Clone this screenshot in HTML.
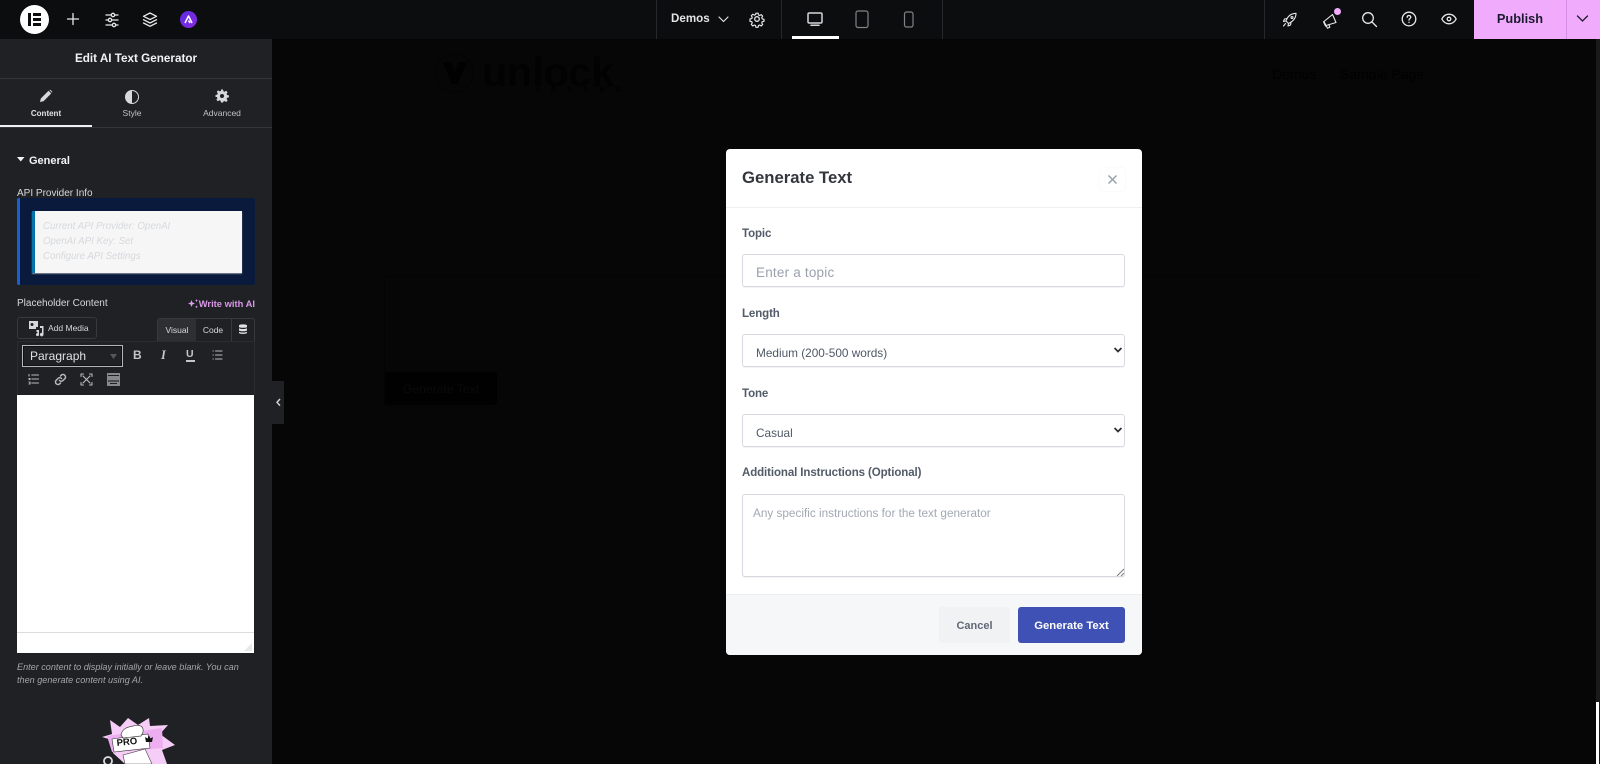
<!DOCTYPE html>
<html lang="en"><head><meta charset="utf-8"><title>Edit AI Text Generator</title>
<style>
*{box-sizing:border-box}
html,body{margin:0;padding:0;width:1600px;height:764px;overflow:hidden;background:#060606;font-family:"Liberation Sans",sans-serif}
.a{position:absolute;white-space:nowrap}
svg{position:absolute;overflow:visible;fill:none}
.ic{stroke:#e6e8ea;stroke-width:1.300;stroke-linecap:round;stroke-linejoin:round}
.t{stroke:#b8babd;stroke-width:1.100;stroke-linecap:round;stroke-linejoin:round}
.lab{font-size:11.500px;font-weight:bold;color:#525b68;line-height:16px;left:742px;letter-spacing:-.1px}
.box{left:742px;width:383px;background:#fff;border:1px solid #d8dae3;border-radius:3px;box-shadow:0 1px 1px rgba(0,0,0,.05)}
</style></head><body>

<!-- dimmed page -->
<svg style="left:430px;top:50px" width="200" height="60" viewBox="0 0 200 60">
<circle cx="24" cy="23" r="19" stroke="#040404" stroke-width="1.200"/>
<path d="M13 12h8l4 10 4-10h8l-9 22h-6z" fill="#010101"/></svg>
<div class="a" style="left:482px;top:52px;font-size:41px;font-weight:bold;line-height:40px;color:#020202">unlock</div>
<div class="a" style="left:535px;top:86px;font-size:7px;font-weight:bold;line-height:10px;color:#010101;letter-spacing:11px">ADDONS</div>
<div class="a" style="left:1272px;top:65px;font-size:14px;line-height:18px;color:#010101">Demos</div>
<div class="a" style="left:1340px;top:65px;font-size:14px;line-height:18px;color:#010101">Sample Page</div>
<div class="a" style="left:384px;top:276px;width:1100px;height:130px;border-top:1px solid #030303;border-left:1px solid #030303"></div>
<div class="a" style="left:385px;top:372px;width:112px;height:33px;background:#010101;border-radius:3px;color:#0a0a0a;font-size:12.200px;line-height:34px;text-align:center">Generate Text</div>

<!-- top bar -->
<div class="a" style="left:0;top:0;width:1600px;height:39px;background:#0c0d0e"></div>
<div class="a" style="left:20px;top:5px;width:29px;height:29px;border-radius:50%;background:#fff"></div>
<div class="a" style="left:28px;top:13px;width:3px;height:13px;background:#0c0d0e"></div>
<div class="a" style="left:33px;top:13px;width:8px;height:3px;background:#0c0d0e"></div>
<div class="a" style="left:33px;top:18px;width:8px;height:3px;background:#0c0d0e"></div>
<div class="a" style="left:33px;top:23px;width:8px;height:3px;background:#0c0d0e"></div>
<svg class="ic" style="left:65px;top:11px" width="16" height="16"><path d="M8 2.500v11M2.500 8h11"/></svg>
<svg class="ic" style="left:103px;top:11px" width="18" height="18"><path d="M3 4h5M12 4h3M3 9h2M9 9h6M3 14h6M13 14h2"/><circle cx="10" cy="4" r="1.700"/><circle cx="7" cy="9" r="1.700"/><circle cx="11" cy="14" r="1.700"/></svg>
<svg class="ic" style="left:141px;top:11px" width="18" height="18"><path d="M9 2l6.500 3.300L9 8.600 2.500 5.300zM2.500 8.700L9 12l6.500-3.300M2.500 12L9 15.300 15.500 12"/></svg>
<div class="a" style="left:180px;top:11px;width:17px;height:17px;border-radius:50%;background:linear-gradient(135deg,#5b2be0,#8a2be2)"></div>
<svg style="left:180px;top:11px" width="17" height="17"><path d="M5 12L8.500 5l3.500 7M8.500 9.500L10 12" stroke="#fff" stroke-width="1.500" stroke-linejoin="round"/></svg>

<div class="a" style="left:656px;top:0;width:1px;height:39px;background:#26282b"></div>
<div class="a" style="left:781px;top:0;width:1px;height:39px;background:#26282b"></div>
<div class="a" style="left:942px;top:0;width:1px;height:39px;background:#26282b"></div>
<div class="a" style="left:1264px;top:0;width:1px;height:39px;background:#26282b"></div>
<div class="a" style="left:671px;top:11px;font-size:11.600px;font-weight:bold;line-height:16px;color:#e2e4e6">Demos</div>
<svg class="ic" style="left:717px;top:13px;stroke-width:1.100" width="13" height="12"><path d="M2 4l4.500 4.500L11 4"/></svg>
<svg class="ic" style="left:749px;top:11px" width="16" height="16"><circle cx="8" cy="8" r="2.300"/><path d="M6.800 1.500h2.400l.4 2 1.300.6 1.800-1 1.600 1.700-1 1.700.5 1.400 2 .4v2.300l-2 .4-.5 1.300 1 1.800-1.600 1.600-1.800-1-1.300.6-.4 1.900H6.800l-.4-1.900-1.300-.6-1.800 1-1.600-1.600 1-1.800-.5-1.300-2-.4V7.900l2-.4.500-1.400-1-1.700 1.600-1.700 1.800 1 1.300-.6z" transform="translate(.8 .8) scale(.9)"/></svg>
<svg style="left:806px;top:11px;stroke:#d5d7da;stroke-width:1.500;stroke-linecap:round" width="18" height="17"><rect x="2" y="2" width="14" height="10" rx="1.200"/><path d="M5 14.300h8"/></svg>
<svg style="left:855px;top:10px;stroke:#808285;stroke-width:1.200" width="14" height="18"><rect x="1" y="1" width="12" height="16.500" rx="2"/></svg>
<svg style="left:903px;top:11px;stroke:#808285;stroke-width:1.200" width="12" height="17"><rect x="1.500" y="1" width="8.500" height="15" rx="2"/></svg>
<div class="a" style="left:792px;top:36px;width:47px;height:3px;background:#fff"></div>

<svg class="ic" style="left:1281px;top:11px;stroke-width:1.100" width="17" height="17"><path d="M5 10C6.500 5.500 10 2.500 15 2.300 15 7 12 10.500 7.500 12.500z"/><path d="M6 7.500L3.500 8 2.500 10.500 5 10M10 11.500L9.500 14 7 15 7.500 12.500M4.500 12.500L2.500 15"/><circle cx="11" cy="6.500" r="1"/></svg>
<svg class="ic" style="left:1321px;top:11px;stroke-width:1.100" width="18" height="18"><path d="M3 10.500L11.500 3.500 15 11.500 5 14.500zM5 14.500l1.500 2.700 2.300-1-1-2.700M2.500 10.800L4.500 15"/></svg>
<div class="a" style="left:1334px;top:8px;width:7px;height:7px;border-radius:50%;background:#f0abfc"></div>
<svg class="ic" style="left:1361px;top:11px" width="17" height="17"><circle cx="7" cy="7" r="5.300"/><path d="M11 11l4.500 4.500"/></svg>
<svg class="ic" style="left:1401px;top:11px" width="16" height="16"><circle cx="8" cy="8" r="6.800"/><path d="M6.200 6.300c0-1.100.8-1.800 1.800-1.800s1.800.7 1.800 1.700c0 1.300-1.800 1.400-1.800 2.900M8 11.300v.2"/></svg>
<svg class="ic" style="left:1441px;top:12px" width="16" height="14"><path d="M.800 7C2.500 3.800 5 2.200 8 2.200s5.500 1.600 7.200 4.800c-1.700 3.200-4.200 4.800-7.200 4.800S2.500 10.200.800 7z"/><circle cx="8" cy="7" r="1.800"/></svg>
<div class="a" style="left:1474px;top:0;width:126px;height:39px;background:#f0abfc"></div>
<div class="a" style="left:1566px;top:0;width:1px;height:39px;background:#d88ee6"></div>
<div class="a" style="left:1474px;top:0;width:92px;height:38px;text-align:center;font-size:12.800px;font-weight:bold;line-height:38px;color:#1b1a2e">Publish</div>
<svg style="left:1576px;top:14px;stroke:#1b1a2e;stroke-width:1.300;stroke-linecap:round" width="13" height="10"><path d="M1.500 2l5 5 5-5"/></svg>

<!-- side panel -->
<div class="a" style="left:0;top:39px;width:272px;height:725px;background:#1f2124"></div>
<div class="a" style="left:0;top:78px;width:272px;height:1px;background:#33363a"></div>
<div class="a" style="left:0;top:50px;width:272px;text-align:center;font-size:11.700px;font-weight:bold;line-height:18px;color:#f1f2f3">Edit AI Text Generator</div>
<div class="a" style="left:0;top:127px;width:272px;height:1px;background:#33363a"></div>
<div class="a" style="left:0;top:125px;width:92px;height:2px;background:#f0f0f1"></div>
<svg style="left:39px;top:89px" width="14" height="14"><path d="M1 13l.8-3.500L9.500 1.800 12.200 4.500 4.500 12.200zM10.300 1l1-.3 2 2-.3 1z" fill="#d5d8dc"/></svg>
<div class="a" style="left:0;top:107px;width:92px;text-align:center;font-size:8px;font-weight:bold;line-height:14px;color:#e0e1e3">Content</div>
<div class="a" style="left:125px;top:90px;width:14px;height:14px;border-radius:50%;background:linear-gradient(90deg,#d5d8dc 50%,#1f2124 50%);border:1.600px solid #d5d8dc"></div>
<div class="a" style="left:92px;top:106px;width:80px;text-align:center;font-size:8.500px;line-height:14px;color:#bfc1c4">Style</div>
<svg style="left:215px;top:89px" width="14" height="14"><path fill-rule="evenodd" d="M6 .5h2l.4 1.800 1.200.5 1.600-1 1.400 1.400-1 1.600.5 1.200 1.800.4v2l-1.800.4-.5 1.200 1 1.600-1.400 1.400-1.600-1-1.200.5L8 13.500H6l-.4-1.800-1.200-.5-1.600 1-1.400-1.400 1-1.600-.5-1.200L.5 8V6l1.800-.4.5-1.200-1-1.600 1.400-1.400 1.600 1 1.200-.5zM7 5a2 2 0 100 4 2 2 0 000-4z" fill="#d5d8dc"/></svg>
<div class="a" style="left:183px;top:106px;width:78px;text-align:center;font-size:8.500px;line-height:14px;color:#bfc1c4">Advanced</div>

<svg style="left:17px;top:157px" width="8" height="6"><path d="M0 0h7.500L3.750 4.500z" fill="#f1f2f3"/></svg>
<div class="a" style="left:29px;top:153px;font-size:11px;font-weight:bold;line-height:16px;color:#f1f2f3">General</div>
<div class="a" style="left:17px;top:187px;font-size:10px;line-height:14px;color:#d5d8dc">API Provider Info</div>
<div class="a" style="left:17px;top:198px;width:238px;height:87px;background:#0a1a3c;border-left:3px solid #1a5fd0;border-radius:2px"></div>
<div class="a" style="left:32px;top:211px;width:210px;height:62px;background:#f6f6f6;border-left:3px solid #0573aa;box-shadow:0 1px 1px rgba(255,255,255,.5)"></div>
<div class="a" style="left:43px;top:220px;font-size:9.700px;font-style:italic;line-height:14px;color:#d6d9dd">Current API Provider: OpenAI</div>
<div class="a" style="left:43px;top:235px;font-size:9.700px;font-style:italic;line-height:14px;color:#d6d9dd">OpenAI API Key: Set</div>
<div class="a" style="left:43px;top:250px;font-size:9.700px;font-style:italic;line-height:14px;color:#d6d9dd">Configure API Settings</div>
<div class="a" style="left:17px;top:297px;font-size:10px;line-height:14px;color:#d5d8dc">Placeholder Content</div>
<svg style="left:187px;top:298px" width="12" height="11"><path d="M4.500 2l1 2.500L8 5.500l-2.500 1-1 2.500-1-2.500L1 5.500l2.500-1zM9.500 1l.5 1.200 1 .4-1 .4-.5 1.200-.5-1.200-1-.4 1-.4zM9.500 7.500l.5 1 1 .4-1 .4-.5 1-.5-1-1-.4 1-.4z" fill="#e09df0"/></svg>
<div class="a" style="right:1345px;top:297px;font-size:9.400px;font-weight:bold;line-height:14px;color:#d898e6">Write with AI</div>

<div class="a" style="left:17px;top:317px;width:80px;height:22px;border:1px solid #36393d;border-radius:3px;background:#1f2124"></div>
<svg style="left:28px;top:320px" width="17" height="16"><path fill-rule="evenodd" d="M1 1h9v6H8v2H1zM4 3a1.500 1.500 0 100 3 1.500 1.500 0 000-3z" fill="#d5d8dc"/><path d="M12 6h3.500v8.500a1.800 1.800 0 11-1.500-1.700V8H12zM8.500 10H11v4.500a1.500 1.500 0 11-1.500-1.400V12H8.500z" fill="#d5d8dc"/></svg>
<div class="a" style="left:48px;top:321px;font-size:8.500px;line-height:14px;color:#d5d8dc">Add Media</div>
<div class="a" style="left:157px;top:318px;width:98px;height:24px;border:1px solid #36393d;border-bottom:0;border-radius:3px 3px 0 0"></div>
<div class="a" style="left:158px;top:319px;width:38px;height:23px;background:#2d2f33;text-align:center;font-size:8.500px;line-height:22px;color:#d5d8dc">Visual</div>
<div class="a" style="left:196px;top:319px;width:34px;height:23px;text-align:center;font-size:8.500px;line-height:22px;color:#d5d8dc">Code</div>
<div class="a" style="left:231px;top:319px;width:1px;height:23px;background:#36393d"></div>
<svg style="left:238px;top:323px" width="10" height="12"><path d="M1 2.500C1 1 9 1 9 2.500V4C9 5 1 5 1 4zM1 5.200c2 1 6 1 8 0v2.300c-2 1-6 1-8 0zM1 8.700c2 1 6 1 8 0v1C9 11.300 1 11.300 1 9.700z" fill="#e0e1e3"/></svg>

<div class="a" style="left:17px;top:341px;width:238px;height:54px;border:1px solid #2a2c30;border-bottom:0;background:#1f2124"></div>
<div class="a" style="left:22px;top:345px;width:101px;height:22px;border:1px solid #b4b6b9;box-shadow:inset 0 0 0 1px #111"></div>
<div class="a" style="left:30px;top:347px;font-size:12px;line-height:18px;color:#dfe1e3">Paragraph</div>
<svg style="left:110px;top:354px" width="8" height="6"><path d="M0 0h7L3.500 5z" fill="#55585c"/></svg>
<div class="a" style="left:133px;top:346px;font-size:12px;font-weight:bold;line-height:18px;color:#c4c6c9">B</div>
<div class="a" style="left:161px;top:346px;font-size:12.500px;font-weight:bold;font-style:italic;line-height:18px;color:#c4c6c9;font-family:'Liberation Serif',serif">I</div>
<div class="a" style="left:186px;top:346px;font-size:10.500px;font-weight:bold;line-height:17px;color:#c4c6c9">U</div>
<div class="a" style="left:186px;top:360px;width:9px;height:1.500px;background:#c4c6c9"></div>
<svg class="t" style="left:212px;top:349px" width="12" height="12"><path d="M3.500 2H10M3.500 6H10M3.500 10H10M1 2h.3M1 6h.3M1 10h.3"/></svg>
<svg class="t" style="left:28px;top:373px" width="12" height="12"><path d="M3.800 2H10.500M3.800 6H10.500M3.800 10H10.500M1 1.500v1.500M1 5.500h1v1H1M1 9h1v2H1"/></svg>
<svg class="t" style="left:54px;top:373px;stroke-width:1.500" width="13" height="13"><path d="M5.500 7.500a2.500 2.500 0 003.500 0l2-2A2.500 2.500 0 007.500 2L6.500 3M7.500 5.500a2.500 2.500 0 00-3.500 0l-2 2A2.500 2.500 0 005.500 11L6.500 10"/></svg>
<svg class="t" style="left:80px;top:373px" width="13" height="13"><path d="M3 3l7 7M10 3l-7 7M1 3.500V1h2.500M9.500 1H12v2.500M12 9.500V12H9.500M3.500 12H1V9.500"/></svg>
<div class="a" style="left:107px;top:373px;width:13px;height:13px;background:#85888c"></div>
<div class="a" style="left:108px;top:375px;width:11px;height:1px;background:#1f2124"></div>
<div class="a" style="left:108px;top:380px;width:11px;height:1.500px;background:#4a4c50"></div>
<div class="a" style="left:110px;top:383px;width:7px;height:1px;background:#1f2124"></div>

<div class="a" style="left:17px;top:395px;width:237px;height:258px;background:#fff"></div>
<div class="a" style="left:17px;top:632px;width:237px;height:1px;background:#dcdcde"></div>
<svg style="left:243px;top:642px" width="10" height="10"><path d="M9 1v8H1z" fill="#e8e8e8"/></svg>
<div class="a" style="left:17px;top:661px;font-size:9.100px;font-style:italic;line-height:13px;color:#a2a5a9">Enter content to display initially or leave blank. You can<br>then generate content using AI.</div>

<!-- PRO art -->
<svg style="left:100px;top:716px" width="80" height="48" viewBox="0 0 80 48">
<path d="M10 4l10 7 8-9 10 7 11-7 1 8 18-1-8 9 15 11-13 5 5 14H25L13 37l-1-13-10-3 10-3z" fill="#f5cdf7"/>
<path d="M7 20l55-8 1 20-51 4z" fill="#ecaef0"/>
<path d="M12 23l36-5 2 14-36 4z" fill="#fff" stroke="#333" stroke-width=".6"/>
<path d="M21 19c1-6 6-8 12-9 5-1 9-1 10 3 1 3-1 5-2 7l-18 2z" fill="#fff" stroke="#444" stroke-width=".7"/>
<path d="M23 39l22-6 7 15H25z" fill="#fff" stroke="#444" stroke-width=".6"/>
<circle cx="8" cy="45" r="4" stroke="#ddd" stroke-width="1.800"/>
<text x="17" y="30" transform="rotate(-6 17 30)" font-family="Liberation Sans,sans-serif" font-size="9.500" font-weight="bold" fill="#111">PRO</text>
<path d="M46 26l-1-5 2.500 1.500 1.500-3 1.500 3 2.500-1.500-1 5z" fill="#111"/></svg>

<!-- collapse -->
<div class="a" style="left:272px;top:381px;width:12px;height:43px;background:#1f2124"></div>
<svg style="left:275px;top:398px;stroke:#d5d8dc;stroke-width:1.400" width="7" height="9"><path d="M5 1L2 4.300 5 7.600"/></svg>

<!-- scrollbar -->
<div class="a" style="left:1596px;top:39px;width:4px;height:725px;background:#1a1a1a"></div>
<div class="a" style="left:1596px;top:702px;width:3px;height:62px;background:#fff"></div>

<!-- modal -->
<div class="a" style="left:726px;top:149px;width:416px;height:506px;background:#fff;border-radius:4px;overflow:hidden">
<div class="a" style="left:0;top:58px;width:416px;height:1px;background:#eff0f2"></div>
<div class="a" style="left:0;top:445px;width:416px;height:61px;background:#f6f7f8;border-top:1px solid #eceef0"></div>
</div>
<div class="a" style="left:742px;top:167px;font-size:16.700px;font-weight:bold;line-height:22px;color:#33373d">Generate Text</div>
<div class="a" style="left:1100px;top:168px;width:25px;height:23px;background:#fff;border-radius:3px;box-shadow:0 0 2px rgba(0,0,0,.05)"></div>
<svg style="left:1107px;top:174px;stroke:#98a1ad;stroke-width:1.500" width="11" height="11"><path d="M1.500 1.500l8 8M9.500 1.500l-8 8"/></svg>

<div class="a lab" style="top:226px">Topic</div>
<div class="a box" style="top:254px;height:33px"></div>
<div class="a" style="left:756px;top:263px;font-size:13.500px;line-height:20px;color:#9aa1ae;letter-spacing:.2px">Enter a topic</div>
<div class="a lab" style="top:306px">Length</div>
<div class="a box" style="top:334px;height:33px"></div>
<div class="a" style="left:756px;top:344px;font-size:11.800px;line-height:18px;color:#4f5866">Medium (200-500 words)</div>
<svg style="left:1113px;top:347px;stroke:#333;stroke-width:1.800" width="10" height="7"><path d="M1.500 1l3.500 3.500L8.500 1"/></svg>
<div class="a lab" style="top:386px">Tone</div>
<div class="a box" style="top:414px;height:33px"></div>
<div class="a" style="left:756px;top:424px;font-size:11.800px;line-height:18px;color:#4f5866">Casual</div>
<svg style="left:1113px;top:427px;stroke:#333;stroke-width:1.800" width="10" height="7"><path d="M1.500 1l3.500 3.500L8.500 1"/></svg>
<div class="a lab" style="top:465px">Additional Instructions (Optional)</div>
<div class="a box" style="top:494px;height:83px"></div>
<div class="a" style="left:753px;top:505px;font-size:11.750px;line-height:18px;color:#a2a8b4">Any specific instructions for the text generator</div>
<svg style="left:1117px;top:569px;stroke:#777;stroke-width:.9" width="7" height="7"><path d="M0 7l7-7M4 7l3-3"/></svg>

<div class="a" style="left:939px;top:607px;width:71px;height:36px;background:#f1f2f4;border-radius:3px;text-align:center;font-size:11px;font-weight:bold;line-height:38px;color:#606875">Cancel</div>
<div class="a" style="left:1018px;top:607px;width:107px;height:36px;background:#3f51b5;border-radius:3px;text-align:center;font-size:11.300px;font-weight:bold;line-height:38px;color:#fff">Generate Text</div>
</body></html>
